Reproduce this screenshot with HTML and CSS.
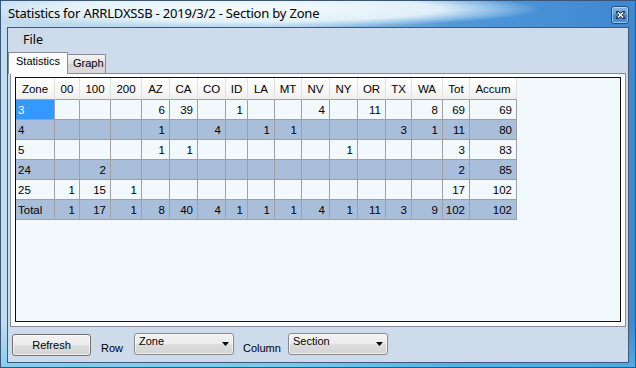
FILE: index.html
```html
<!DOCTYPE html>
<html>
<head>
<meta charset="utf-8">
<link rel="stylesheet" href="styles.css">
</head>
<body>
<div class="window">
  <div class="titlebar">
    <span class="title">Statistics for ARRLDXSSB - 2019/3/2 - Section by Zone</span>
    <button class="close" aria-label="Close">
      <svg width="9" height="8" viewBox="0 0 9 8"><path d="M1.5 1.2 L7.5 6.8 M7.5 1.2 L1.5 6.8" stroke="#1d3554" stroke-width="3.2" stroke-linecap="square"/><path d="M1.8 1.5 L7.2 6.5 M7.2 1.5 L1.8 6.5" stroke="#ffffff" stroke-width="1.4"/></svg>
    </button>
  </div>
  <div class="client">
    <div class="menubar"><span class="menu-item">File</span></div>
    <div class="tabs">
      <div class="tab active">Statistics</div>
      <div class="tab">Graph</div>
    </div>
    <div class="tabpanel">
      <div class="grid">
        <div class="table">
          <div class="hc">Zone</div><div class="hc">00</div><div class="hc">100</div><div class="hc">200</div><div class="hc">AZ</div><div class="hc">CA</div><div class="hc">CO</div><div class="hc">ID</div><div class="hc">LA</div><div class="hc">MT</div><div class="hc">NV</div><div class="hc">NY</div><div class="hc">OR</div><div class="hc">TX</div><div class="hc">WA</div><div class="hc">Tot</div><div class="hc">Accum</div>

          <div class="c k sel">3</div><div class="c"></div><div class="c"></div><div class="c"></div><div class="c">6</div><div class="c">39</div><div class="c"></div><div class="c">1</div><div class="c"></div><div class="c"></div><div class="c">4</div><div class="c"></div><div class="c">11</div><div class="c"></div><div class="c">8</div><div class="c">69</div><div class="c">69</div>

          <div class="c k alt">4</div><div class="c alt"></div><div class="c alt"></div><div class="c alt"></div><div class="c alt">1</div><div class="c alt"></div><div class="c alt">4</div><div class="c alt"></div><div class="c alt">1</div><div class="c alt">1</div><div class="c alt"></div><div class="c alt"></div><div class="c alt"></div><div class="c alt">3</div><div class="c alt">1</div><div class="c alt">11</div><div class="c alt">80</div>

          <div class="c k">5</div><div class="c"></div><div class="c"></div><div class="c"></div><div class="c">1</div><div class="c">1</div><div class="c"></div><div class="c"></div><div class="c"></div><div class="c"></div><div class="c"></div><div class="c">1</div><div class="c"></div><div class="c"></div><div class="c"></div><div class="c">3</div><div class="c">83</div>

          <div class="c k alt">24</div><div class="c alt"></div><div class="c alt">2</div><div class="c alt"></div><div class="c alt"></div><div class="c alt"></div><div class="c alt"></div><div class="c alt"></div><div class="c alt"></div><div class="c alt"></div><div class="c alt"></div><div class="c alt"></div><div class="c alt"></div><div class="c alt"></div><div class="c alt"></div><div class="c alt">2</div><div class="c alt">85</div>

          <div class="c k">25</div><div class="c">1</div><div class="c">15</div><div class="c">1</div><div class="c"></div><div class="c"></div><div class="c"></div><div class="c"></div><div class="c"></div><div class="c"></div><div class="c"></div><div class="c"></div><div class="c"></div><div class="c"></div><div class="c"></div><div class="c">17</div><div class="c">102</div>

          <div class="c k alt">Total</div><div class="c alt">1</div><div class="c alt">17</div><div class="c alt">1</div><div class="c alt">8</div><div class="c alt">40</div><div class="c alt">4</div><div class="c alt">1</div><div class="c alt">1</div><div class="c alt">1</div><div class="c alt">4</div><div class="c alt">1</div><div class="c alt">11</div><div class="c alt">3</div><div class="c alt">9</div><div class="c alt">102</div><div class="c alt">102</div>
        </div>
      </div>
    </div>
    <div class="toolbar">
      <button class="btn">Refresh</button>
      <span class="label label-row">Row</span>
      <div class="combo"><span class="combo-text">Zone</span><svg class="arrow" width="7" height="4" viewBox="0 0 7 4"><polygon points="0,0 7,0 3.5,4" fill="#000"/></svg></div>
      <span class="label label-col">Column</span>
      <div class="combo"><span class="combo-text">Section</span><svg class="arrow" width="7" height="4" viewBox="0 0 7 4"><polygon points="0,0 7,0 3.5,4" fill="#000"/></svg></div>
    </div>
  </div>
</div>
</body>
</html>
```
FILE: styles.css
```css
* { box-sizing: border-box; }
html, body { margin: 0; padding: 0; }
body {
  width: 636px;
  height: 368px;
  overflow: hidden;
  font-family: "Liberation Sans", Arial, sans-serif;
}
.window {
  width: 636px;
  height: 368px;
  border: 1px solid #3a5676;
  display: flex;
  flex-direction: column;
  background:
    radial-gradient(290px 19px at 250px 8px, rgba(246,251,254,1) 0%, rgba(230,243,250,0.95) 65%, rgba(230,243,250,0) 100%),
    linear-gradient(to bottom, rgba(0,0,0,0) 88%, rgba(90,195,240,0.6) 100%),
    linear-gradient(to right, #c3dcee 0%, #a6cfea 45%, #4f97d9 72%, #3f88d2 100%);
}
.titlebar {
  height: 26px;
  display: flex;
  align-items: flex-start;
  padding-left: 7px;
}
.title {
  font-family: "Noto Sans", sans-serif;
  font-size: 13px;
  line-height: 16px;
  letter-spacing: -0.2px;
  margin-top: 4px;
  color: #000;
}
.close {
  margin-left: auto;
  margin-right: 6px;
  margin-top: 5px;
  width: 18px;
  height: 18px;
  padding: 0;
  border: 1px solid #2b4e76;
  border-radius: 3px;
  background: linear-gradient(#86b9e8, #5b98d6 50%, #4584cb 51%, #4f8fd4);
  box-shadow: inset 0 0 0 1px rgba(255,255,255,0.45);
  display: flex;
  align-items: center;
  justify-content: center;
}
.client {
  flex: 1;
  margin: 0 6px 4px 6px;
  border: 1px solid #3d5a7c;
  background: #cddbea;
  display: flex;
  flex-direction: column;
}
.menubar {
  height: 24px;
  padding-left: 15px;
  display: flex;
  align-items: center;
  font-family: "Noto Sans", sans-serif;
  font-size: 12.5px;
  line-height: 16px;
  color: #000;
}
.tabs {
  height: 21px;
  display: flex;
  align-items: flex-end;
}
.tab {
  font-size: 11px;
  line-height: 13px;
  color: #000;
  border: 1px solid #898c95;
  border-bottom: none;
}
.tab.active {
  width: 60px;
  height: 22px;
  margin-bottom: -1px;
  position: relative;
  z-index: 1;
  padding: 2px 0 0 7px;
  background: #fcfcfc;
}
.tab:not(.active) {
  width: 38px;
  height: 19px;
  border-left: none;
  padding: 2px 0 0 5px;
  background: linear-gradient(#f3f3f3, #e2e2e2 50%, #d6d6d6 51%, #d9d9d9);
}
.tabpanel {
  height: 254px;
  margin: 0 2px;
  border: 1px solid #898c95;
  background: #fcfcfe;
  padding: 3px 4px 4px 4px;
}
.grid {
  height: 100%;
  border: 1px solid #101010;
  background: #f1f9fd;
}
.table {
  display: grid;
  grid-template-columns: 39px 25px 31px 31px 28px 28px 28px 22px 27px 27px 28px 28px 28px 26px 31px 27px 47px;
  width: 501px;
  font-size: 11.5px;
  color: #000;
}
.hc {
  height: 22px;
  padding-top: 3px;
  line-height: 17px;
  text-align: center;
  background: linear-gradient(#ffffff, #f7f7f7 60%, #efefef);
  border-right: 1px solid #e0e0e0;
  border-bottom: 1px solid #a0a0a0;
  white-space: nowrap;
}
.c {
  height: 20px;
  padding: 2px 4px 0 0;
  line-height: 17px;
  text-align: right;
  background: #f1f9fd;
  border-right: 1px solid #a0a0a0;
  border-bottom: 1px solid #a0a0a0;
  white-space: nowrap;
}
.c.k {
  text-align: left;
  padding-left: 2px;
}
.c.alt { background: #a9bedb; }
.c.sel {
  background: #3399ff;
  color: #fff;
}
.toolbar {
  flex: 1;
  display: flex;
  align-items: flex-start;
  padding-left: 4px;
  font-size: 11px;
  color: #000;
}
.btn {
  margin-top: 7px;
  width: 79px;
  height: 22px;
  padding: 0;
  font-family: "Liberation Sans", Arial, sans-serif;
  font-size: 11px;
  color: #000;
  border: 1px solid #707070;
  border-radius: 3px;
  background: linear-gradient(#f2f2f2, #ebebeb 50%, #dddddd 51%, #d3d3d3);
  box-shadow: inset 0 0 0 1px rgba(255,255,255,0.7);
}
.label {
  margin-top: 15px;
  line-height: 13px;
}
.label-row { margin-left: 10px; width: 33px; }
.label-col { margin-left: 9px; width: 45px; }
.combo {
  margin-top: 6px;
  width: 100px;
  height: 22px;
  border: 1px solid #8a8a8a;
  border-radius: 3px;
  background: linear-gradient(#f2f2f2, #ebebeb 50%, #dddddd 51%, #d3d3d3);
  box-shadow: inset 0 0 0 1px rgba(255,255,255,0.6);
  display: flex;
  align-items: flex-start;
  padding-left: 4px;
}
.combo-text {
  line-height: 12px;
  margin-top: 1px;
}
.arrow {
  margin-left: auto;
  margin-right: 4px;
  margin-top: 8px;
}
```
